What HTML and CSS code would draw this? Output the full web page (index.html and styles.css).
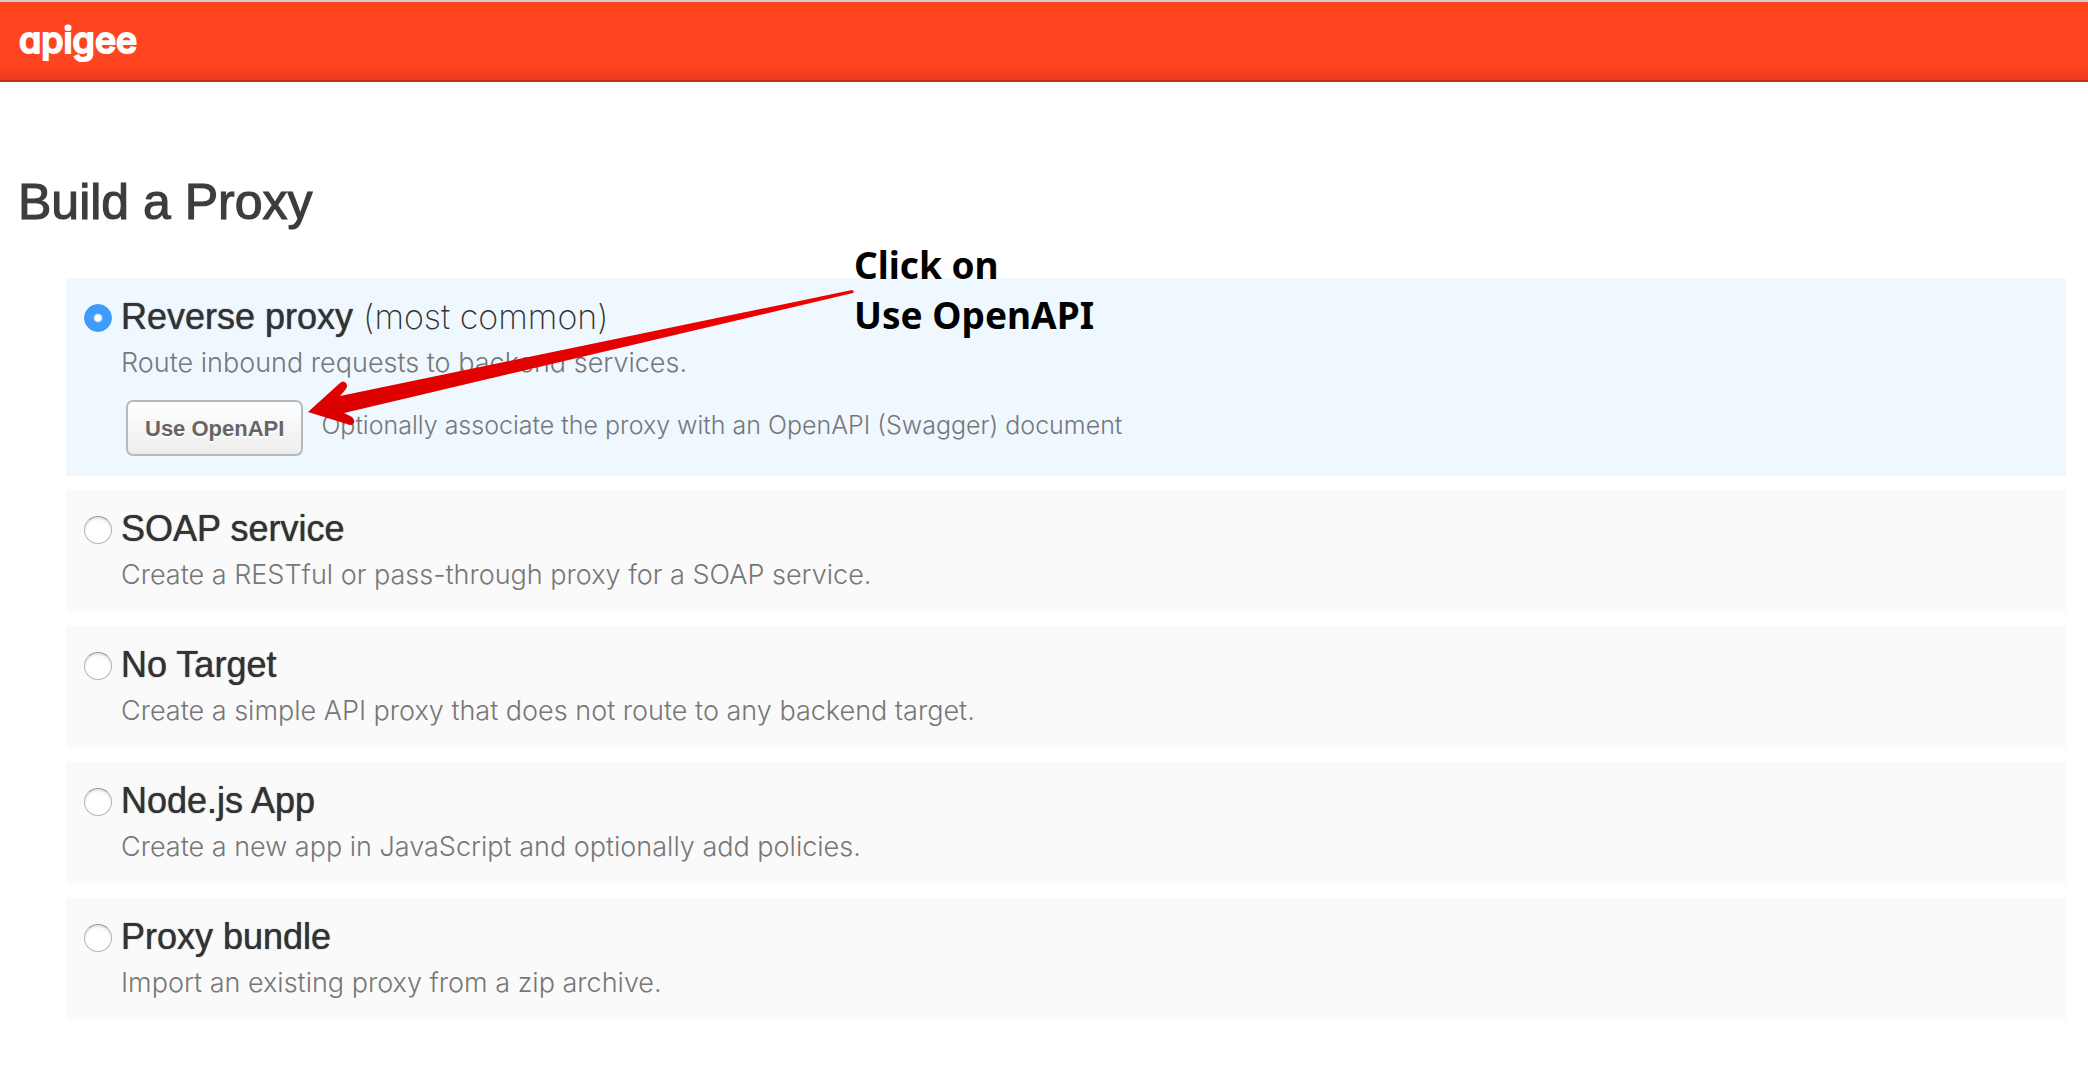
FILE: index.html
```html
<!DOCTYPE html>
<html lang="en">
<head>
<meta charset="utf-8">
<title>Build a Proxy</title>
<link rel="stylesheet" href="styles.css">
</head>
<body>
<header class="topbar">
  <a class="logo" href="#">apigee</a>
</header>
<main class="page">
  <h1 class="page-title">Build a Proxy</h1>
  <form class="options">
    <section class="option option-selected">
      <input class="option-radio" type="radio" name="proxy-type" id="reverse" checked>
      <div class="option-body">
        <label class="option-title" for="reverse">Reverse proxy <span class="option-note">(most common)</span></label>
        <p class="option-text">Route inbound requests to backend services.</p>
        <div class="openapi">
          <button class="button" type="button">Use OpenAPI</button>
          <p class="openapi-text">Optionally associate the proxy with an OpenAPI (Swagger) document</p>
        </div>
      </div>
      <div class="callout">
        <svg class="callout-arrow" width="550" height="144" viewBox="306 286 550 144" aria-hidden="true">
          <defs>
            <linearGradient id="red" x1="0" y1="0" x2="0.07" y2="1">
              <stop offset="0" stop-color="#f40000"/>
              <stop offset="1" stop-color="#d80000"/>
            </linearGradient>
          </defs>
          <path fill="url(#red)" d="M308 412L340 383Q343 380 346 383Q348 386 346 389L340 396L852 290Q855 291 853 293L344 413L352 417Q356 421 353 424Q351 426 347 424Z"/>
        </svg>
        <p class="callout-text">Click on<br>Use OpenAPI</p>
      </div>
    </section>
    <section class="option">
      <input class="option-radio" type="radio" name="proxy-type" id="soap">
      <div class="option-body">
        <label class="option-title" for="soap">SOAP service</label>
        <p class="option-text">Create a RESTful or pass-through proxy for a SOAP service.</p>
      </div>
    </section>
    <section class="option">
      <input class="option-radio" type="radio" name="proxy-type" id="none">
      <div class="option-body">
        <label class="option-title" for="none">No Target</label>
        <p class="option-text">Create a simple API proxy that does not route to any backend target.</p>
      </div>
    </section>
    <section class="option">
      <input class="option-radio" type="radio" name="proxy-type" id="node">
      <div class="option-body">
        <label class="option-title" for="node">Node.js App</label>
        <p class="option-text">Create a new app in JavaScript and optionally add policies.</p>
      </div>
    </section>
    <section class="option">
      <input class="option-radio" type="radio" name="proxy-type" id="bundle">
      <div class="option-body">
        <label class="option-title" for="bundle">Proxy bundle</label>
        <p class="option-text">Import an existing proxy from a zip archive.</p>
      </div>
    </section>
  </form>
</main>
</body>
</html>
```
FILE: styles.css
```css
* { box-sizing: border-box; }

body {
  margin: 0;
  background: #fff;
  color: #333;
  font-family: "Liberation Sans", Arial, sans-serif;
}

p, h1 { margin: 0; }

.topbar {
  display: flex;
  align-items: center;
  height: 82px;
  padding: 0 19px 2px;
  border-top: 2px solid #d2cecc;
  border-bottom: 2px solid #bc3118;
  background: linear-gradient(#ff4520 80%, #ec3a1b);
}

.logo {
  color: #fff;
  font: 500 36px/44px Inter, sans-serif;
  font-feature-settings: "cv11";
  -webkit-text-stroke: 2px #fff;
  text-decoration: none;
}

.page { padding: 90px 22px 70px 18px; }

.page-title {
  color: #3d3d3d;
  font-size: 50px;
  font-weight: 400;
  line-height: 60px;
  -webkit-text-stroke: 1px #3d3d3d;
  text-shadow: 0 0 1px #3d3d3d;
}

.options {
  display: flex;
  flex-direction: column;
  gap: 14px;
  margin: 46px 0 0 48px;
}

.option {
  position: relative;
  display: flex;
  gap: 9px;
  padding: 17px 18px 20px;
  background: #fafafa;
}

.option-selected { background: #eff7ff; }

.option-radio {
  appearance: none;
  flex: none;
  width: 28px;
  height: 28px;
  margin: 9px 0 0;
  border: 1px solid #b4b4b4;
  border-top-color: #999;
  border-radius: 50%;
  background: #fff;
  box-shadow: inset 0 2px 2px #e4e4e4;
}

.option-radio:checked {
  border-color: #3d97f5;
  background: radial-gradient(circle, #fff 3px, #3f9bfc 5px);
  box-shadow: none;
}

.option-title {
  display: block;
  font-size: 36px;
  line-height: 44px;
  text-shadow: 0 0 1px #333;
}

.option-note {
  font-family: Inter, sans-serif;
  font-size: 34px;
  font-weight: 200;
  text-shadow: none;
}

.option-text {
  margin-top: 7px;
  color: #777;
  font: 300 27px/34px Inter, sans-serif;
}

.openapi {
  display: flex;
  align-items: flex-start;
  gap: 18px;
  margin: 20px 0 0 5px;
}

.button {
  height: 56px;
  padding: 2px 17px 0;
  border: 2px solid #b1bac1;
  border-radius: 7px;
  background: linear-gradient(#fff, #ededed);
  color: #666;
  font: 700 22px/26px "Liberation Sans", Arial, sans-serif;
  text-shadow: 0 2px 0 #fff;
}

.openapi-text {
  padding-top: 8px;
  color: #777;
  font: 300 25px/34px Inter, sans-serif;
}

.callout {
  position: absolute;
  top: -38px;
  left: 240px;
  display: flex;
}

.callout-arrow { margin-top: 46px; }

.callout-text {
  margin-left: -2px;
  color: #000;
  font: 700 37px/50px "Noto Sans", sans-serif;
  white-space: nowrap;
}
```
